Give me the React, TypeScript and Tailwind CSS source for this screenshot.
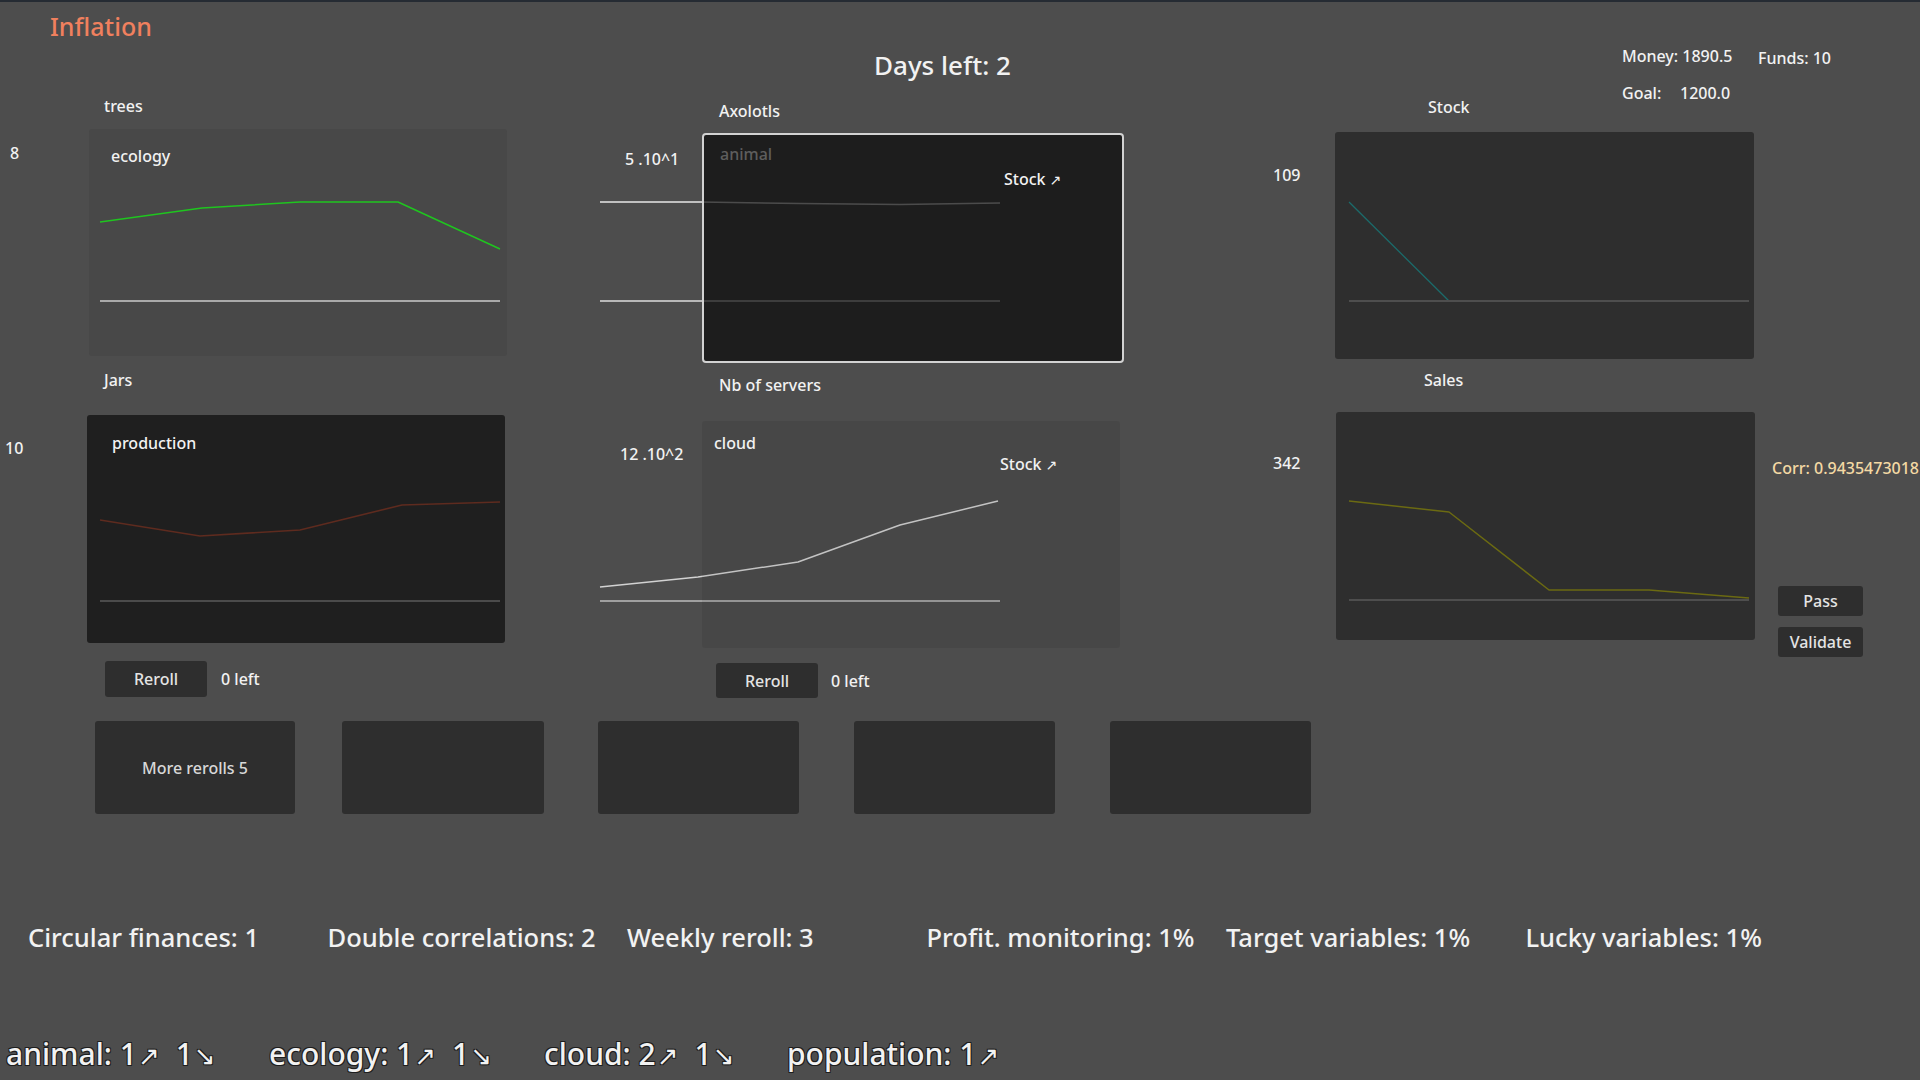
import React from "react";

type Line = { pts: [number, number][]; color: string; w: number };

function Plot({ w, h, lines }: { w: number; h: number; lines: Line[] }) {
  return (
    <svg
      className="absolute left-0 top-0 pointer-events-none"
      width={w}
      height={h}
      viewBox={`0 0 ${w} ${h}`}
    >
      {lines.map((l, i) => (
        <polyline
          key={i}
          points={l.pts.map((p) => p.join(",")).join(" ")}
          fill="none"
          stroke={l.color}
          strokeWidth={l.w}
          strokeLinejoin="round"
        />
      ))}
    </svg>
  );
}

function Up({ big }: { big?: boolean }) {
  return big ? (
    <span className="font-['DejaVu_Sans',sans-serif] text-[26px] ml-[1px]">↗</span>
  ) : (
    <span className="font-['DejaVu_Sans',sans-serif] text-[14px] ml-[4px]">↗</span>
  );
}
function Down() {
  return <span className="font-['DejaVu_Sans',sans-serif] text-[26px] ml-[1px]">↘</span>;
}

function Btn({ label, cls }: { label: string; cls: string }) {
  return (
    <div className={"flex items-center justify-center bg-[#2e2e2e] rounded-[3px] text-[#e4e4e4] " + cls}>
      {label}
    </div>
  );
}

const stats = [
  "Circular finances: 1",
  "Double correlations: 2",
  "Weekly reroll: 3",
  "Profit. monitoring: 1%",
  "Target variables: 1%",
  "Lucky variables: 1%",
];

export default function App() {
  return (
    <div className="w-[1920px] h-[1080px] bg-[#4d4d4d] border-t-2 border-[#252b33] overflow-hidden text-[#f2f2f2] font-['Noto_Sans','Open_Sans',sans-serif] font-medium text-[16px] leading-[22px] flex flex-col">
      {/* Header */}
      <div className="h-[90px] flex flex-row shrink-0">
        <div className="w-[874px] pl-[50px] pt-[6px] text-[25px] leading-[36px] text-[#f0805e]">Inflation</div>
        <div className="w-[748px] pt-[45px] text-[26px] leading-[36px]">Days left: 2</div>
        <div className="flex flex-col pt-[43px]">
          <div className="flex flex-row">
            <span className="w-[136px]">Money: 1890.5</span>
            <span className="mt-[2px]">Funds: 10</span>
          </div>
          <div className="flex flex-row mt-[13px]">
            <span className="w-[58px]">Goal:</span>
            <span>1200.0</span>
          </div>
        </div>
      </div>

      {/* Charts section */}
      <div className="h-[606px] flex flex-row items-start shrink-0">
        {/* Left column */}
        <div className="w-[560px] flex flex-col">
          <div className="mt-[3px] pl-[104px]">trees</div>
          <div className="mt-[12px] flex flex-row items-start">
            <div className="w-[89px] pl-[10px] pt-[13px]">8</div>
            <div className="relative w-[418px] h-[227px] bg-[#484848] rounded-[3px] pl-[22px] pt-[16px]">
              <Plot
                w={418}
                h={227}
                lines={[
                  { pts: [[11, 172], [411, 172]], color: "#a9a9a9", w: 2 },
                  { pts: [[11, 93], [113, 79], [211, 73], [309, 73], [411, 120]], color: "#1fc51f", w: 1.5 },
                ]}
              />
              <span className="relative">ecology</span>
            </div>
          </div>
          <div className="mt-[13px] pl-[104px]">Jars</div>
          <div className="mt-[24px] flex flex-row items-start">
            <div className="w-[87px] pl-[5px] pt-[22px]">10</div>
            <div className="relative w-[418px] h-[228px] bg-[#1f1f1f] rounded-[3px] pl-[25px] pt-[17px]">
              <Plot
                w={418}
                h={228}
                lines={[
                  { pts: [[13, 186], [413, 186]], color: "#4b4b4b", w: 2 },
                  { pts: [[13, 105], [113, 121], [213, 115], [315, 90], [413, 87]], color: "#5e2b1f", w: 1.6 },
                ]}
              />
              <span className="relative">production</span>
            </div>
          </div>
          <div className="mt-[18px] flex flex-row items-center">
            <Btn label="Reroll" cls="ml-[105px] w-[102px] h-[36px]" />
            <span className="ml-[14px]">0 left</span>
          </div>
        </div>

        {/* Middle column */}
        <div className="w-[640px] flex flex-col">
          <div className="mt-[8px] pl-[159px]">Axolotls</div>
          <div className="relative mt-[11px] flex flex-row items-start">
            <Plot
              w={640}
              h={230}
              lines={[
                { pts: [[40, 168], [440, 168]], color: "#dcdcdc", w: 1.5 },
                { pts: [[40, 69], [140, 69], [240, 70.5], [340, 71.5], [440, 70]], color: "#e8e8e8", w: 1.5 },
              ]}
            />
            <div className="relative w-[142px] pl-[65px] pt-[15px]">5 .10^1</div>
            <div className="relative z-10 w-[422px] h-[230px] border-2 border-[#d2d2d2] rounded-[4px] bg-[rgba(8,8,8,0.7)] flex flex-col items-start pl-[16px] pt-[8px]">
              <span className="text-[#5e5e5e]">animal</span>
              <span className="ml-[284px] mt-[3px]">
                Stock
                <Up />
              </span>
            </div>
          </div>
          <div className="mt-[11px] pl-[159px]">Nb of servers</div>
          <div className="relative mt-[25px] flex flex-row items-start">
            <Plot
              w={640}
              h={227}
              lines={[
                { pts: [[40, 180], [440, 180]], color: "#bdbdbd", w: 1.5 },
                { pts: [[40, 166], [138, 156], [238, 141], [340, 104], [438, 80]], color: "#d2d2d2", w: 1.5 },
              ]}
            />
            <div className="relative w-[142px] pl-[60px] pt-[22px]">12 .10^2</div>
            <div className="relative z-10 w-[418px] h-[227px] rounded-[3px] bg-[rgba(0,0,0,0.07)] flex flex-col items-start pl-[12px] pt-[11px]">
              <span>cloud</span>
              <span className="ml-[286px] mt-[-1px]">
                Stock
                <Up />
              </span>
            </div>
          </div>
          <div className="mt-[15px] flex flex-row items-center">
            <Btn label="Reroll" cls="ml-[156px] w-[102px] h-[35px]" />
            <span className="ml-[13px]">0 left</span>
          </div>
        </div>

        {/* Right column */}
        <div className="w-[720px] flex flex-col">
          <div className="mt-[4px] pl-[228px]">Stock</div>
          <div className="mt-[14px] flex flex-row items-start">
            <div className="w-[135px] pl-[73px] pt-[32px]">109</div>
            <div className="relative w-[419px] h-[227px] bg-[#2e2e2e] rounded-[3px]">
              <Plot
                w={419}
                h={227}
                lines={[
                  { pts: [[14, 70], [114, 169]], color: "#1b6b6b", w: 1.3 },
                  { pts: [[14, 169], [414, 169]], color: "#4e4e4e", w: 2 },
                ]}
              />
            </div>
          </div>
          <div className="mt-[10px] pl-[224px]">Sales</div>
          <div className="mt-[21px] flex flex-row items-start">
            <div className="w-[136px] pl-[73px] pt-[40px]">342</div>
            <div className="relative w-[419px] h-[228px] bg-[#2e2e2e] rounded-[3px]">
              <Plot
                w={419}
                h={228}
                lines={[
                  { pts: [[13, 188], [413, 188]], color: "#4e4e4e", w: 2 },
                  { pts: [[13, 89], [113, 100], [213, 178], [313, 178], [413, 186]], color: "#6b6a12", w: 1.5 },
                ]}
              />
            </div>
            <div className="flex flex-col items-start">
              <span className="pl-[17px] pt-[45px] whitespace-nowrap text-[#f4d9a4]">Corr: 0.9435473018</span>
              <Btn label="Pass" cls="ml-[23px] mt-[107px] w-[85px] h-[30px]" />
              <Btn label="Validate" cls="ml-[23px] mt-[11px] w-[85px] h-[30px]" />
            </div>
          </div>
        </div>
      </div>

      {/* Cards */}
      <div className="mt-[23px] flex flex-row shrink-0">
        <div className="ml-[95px] w-[200px] h-[93px] bg-[#2e2e2e] rounded-[3px] flex items-center justify-center text-[#d8d8d8]">
          More rerolls 5
        </div>
        <div className="ml-[47px] w-[202px] h-[93px] bg-[#2e2e2e] rounded-[3px]" />
        <div className="ml-[54px] w-[201px] h-[93px] bg-[#2e2e2e] rounded-[3px]" />
        <div className="ml-[55px] w-[201px] h-[93px] bg-[#2e2e2e] rounded-[3px]" />
        <div className="ml-[55px] w-[201px] h-[93px] bg-[#2e2e2e] rounded-[3px]" />
      </div>

      {/* Stats */}
      <div className="mt-[105px] pl-[28px] flex flex-row text-[25.5px] leading-[36px] shrink-0">
        {stats.map((s) => (
          <div key={s} className="w-[299.5px] whitespace-nowrap">
            {s}
          </div>
        ))}
      </div>

      {/* Bottom variables */}
      <div className="mt-[80px] pl-[6px] flex flex-row text-[30px] leading-[38px] whitespace-nowrap [text-shadow:-1px_-1px_0_#1e1e1e,1px_-1px_0_#1e1e1e,-1px_1px_0_#1e1e1e,1px_1px_0_#1e1e1e] shrink-0">
        <div className="w-[263px]">
          animal: 1<Up big />
          <span className="ml-[16px]">1</span>
          <Down />
        </div>
        <div className="w-[275px]">
          ecology: 1<Up big />
          <span className="ml-[16px]">1</span>
          <Down />
        </div>
        <div className="w-[243px]">
          cloud: 2<Up big />
          <span className="ml-[16px]">1</span>
          <Down />
        </div>
        <div>
          population: 1<Up big />
        </div>
      </div>
    </div>
  );
}
